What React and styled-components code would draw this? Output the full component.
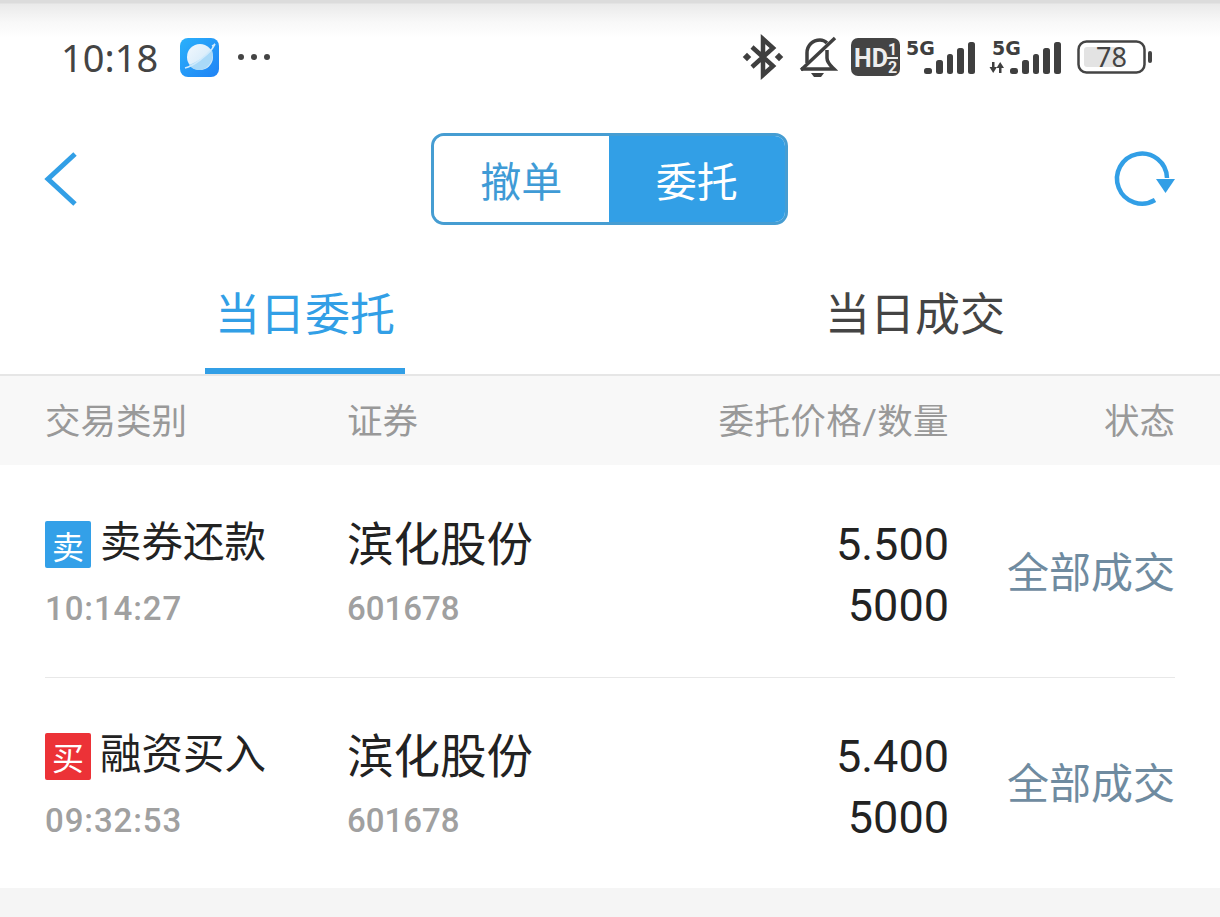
import React from "react";
import styled, { createGlobalStyle } from "styled-components";

const CJK = `"Noto Sans CJK SC", "Noto Sans", sans-serif`;
const DIGIT = `Roboto, "Noto Sans CJK SC", sans-serif`;
const BLUE = "#329fe6";
const INK = "#3f3f3f";

const Global = createGlobalStyle`
  html, body { margin: 0; padding: 0; background: #fff; }
  body { font-family: ${CJK}; }
`;

const Page = styled.div`
  width: 1220px;
  height: 917px;
  overflow: hidden;
  display: flex;
  flex-direction: column;
  background: #fff;
`;

const StatusBar = styled.div`
  height: 105px;
  box-sizing: border-box;
  padding: 0 67px 0 61px;
  display: flex;
  align-items: center;
  justify-content: space-between;
  background: linear-gradient(#dcdcdc 0, #dcdcdc 3px, #eaeaea 4px, #f8f8f8 22px, #ffffff 38px);
`;

const StatusSide = styled.div`
  display: flex;
  align-items: center;
  margin-top: 9px;
`;

const Clock = styled.span`
  font-family: "Noto Sans", sans-serif;
  font-size: 38px;
  line-height: 44px;
  color: #444;
  margin-right: 22px;
`;

const NavBar = styled.div`
  height: 148px;
  box-sizing: border-box;
  padding: 0 45px;
  display: flex;
  align-items: center;
`;

const NavSide = styled.div`
  flex: 1;
  display: flex;
  justify-content: ${(p) => (p.$end ? "flex-end" : "flex-start")};
`;

const Segments = styled.div`
  display: flex;
  width: 357px;
  height: 92px;
  box-sizing: border-box;
  border: 3px solid #469dd2;
  border-radius: 13px;
  overflow: hidden;
  margin: -1px 1px 0 -1px;
`;

const Segment = styled.div`
  flex: 1;
  display: flex;
  align-items: center;
  justify-content: center;
  font-size: 41px;
  color: ${(p) => (p.$on ? "#fff" : "#3f9bd6")};
  background: ${(p) => (p.$on ? BLUE : "#fff")};
`;

const Tabs = styled.div`
  height: 123px;
  box-sizing: border-box;
  display: flex;
  border-bottom: 2px solid #e6e6e6;
`;

const Tab = styled.div`
  width: 610px;
  display: flex;
  align-items: center;
  justify-content: center;
  position: relative;
  font-size: 45px;
  color: ${(p) => (p.$on ? BLUE : "#444")};
  padding-bottom: 4px;
  box-sizing: border-box;
`;

const TabMark = styled.span`
  position: absolute;
  left: 205px;
  bottom: 0;
  width: 200px;
  height: 6px;
  background: ${BLUE};
`;

const Grid = `
  display: grid;
  grid-template-columns: 302px 300px 1fr 226px;
  padding: 0 45px;
`;

const HeadRow = styled.div`
  ${Grid}
  height: 89px;
  align-items: center;
  background: #f8f8f8;
  color: #999;
  font-size: 35.5px;
  padding-bottom: 4px;
  box-sizing: border-box;
`;

const Right = styled.div`
  text-align: right;
`;

const HeadNum = styled(Right)`
  font-family: ${DIGIT};
  letter-spacing: 0.4px;
`;

const Row = styled.div`
  ${Grid}
  height: 212px;
  box-sizing: border-box;
  align-items: center;
  position: relative;
  & + & {
    height: 211px;
  }
  & + &::before {
    content: "";
    position: absolute;
    left: 45px;
    right: 45px;
    top: 0;
    height: 1px;
    background: #e8e8e8;
  }
`;

const Cell = styled.div`
  display: flex;
  flex-direction: column;
  gap: 26px;
  padding-top: 2px;
`;

const KindLine = styled.div`
  display: flex;
  align-items: center;
  gap: 9px;
  height: 48px;
  font-size: 41.5px;
  color: #222;
`;

const Badge = styled.span`
  width: 46px;
  height: 47px;
  margin-top: 11px;
  border-radius: 2px;
  background: ${(p) => p.$color};
  color: #fff;
  font-size: 32px;
  display: flex;
  align-items: center;
  justify-content: center;
`;

const Sub = styled.div`
  font-family: ${DIGIT};
  font-size: 33px;
  font-weight: 500;
  line-height: 40px;
  color: #a0a0a0;
  letter-spacing: ${(p) => (p.$time ? "0.9px" : "0")};
`;

const StockName = styled.div`
  font-size: 46.5px;
  height: 48px;
  box-sizing: border-box;
  padding-top: 4px;
  line-height: 44px;
  color: #222;
`;

const Numbers = styled(Right)`
  font-family: ${DIGIT};
  font-size: 45px;
  font-weight: 450;
  line-height: 61px;
  padding-top: 8px;
  color: #222;
`;

const Status = styled(Right)`
  font-size: 42px;
  padding-bottom: 4px;
  color: #6f8ba0;
`;

const Footer = styled.div`
  flex: 1;
  background: #f5f5f5;
`;

const Icon = styled.svg`
  display: block;
  flex: none;
  fill: none;
  overflow: visible;
  margin-left: ${(p) => p.$gap || 0}px;
`;

const Dots = () => (
  <Icon width="36" height="10" viewBox="0 0 36 10" $gap={18}>
    <circle cx="4" cy="5" r="3" fill="#444" />
    <circle cx="17" cy="5" r="3" fill="#444" />
    <circle cx="30" cy="5" r="3" fill="#444" />
  </Icon>
);

const AppLogo = () => (
  <Icon width="39" height="39" viewBox="0 0 39 39">
    <defs>
      <linearGradient id="lg" x1="0" y1="0" x2="1" y2="1">
        <stop offset="0" stopColor="#2bb1fb" />
        <stop offset="1" stopColor="#1f82f5" />
      </linearGradient>
      <linearGradient id="top" x1="0" y1="0" x2="1" y2="1">
        <stop offset="0" stopColor="#f2f8fd" />
        <stop offset="1" stopColor="#cbe6f9" />
      </linearGradient>
    </defs>
    <rect width="39" height="39" rx="8" fill="url(#lg)" />
    <circle cx="20" cy="19" r="13" fill="url(#top)" />
    <path d="M9 27 C17 24 26 18 32 12 C35 22 28 32 19 32 C15 32 11 30 9 27Z" fill="#a9d9f8" />
    <path d="M5 30 C14 28 26 18 32 11 L35 6 C35 6 34 7 32 8" stroke="#cfeafc" strokeWidth="1.6" />
  </Icon>
);

const Bluetooth = () => (
  <Icon width="38" height="42" viewBox="0 0 38 42">
    <path d="M8 11 L29 30 L19 39 V3 L29 12 L8 31" stroke={INK} strokeWidth="4.5" />
    <rect x="0" y="18" width="6" height="6" transform="rotate(45 3 21)" fill={INK} />
    <rect x="32" y="18" width="6" height="6" transform="rotate(45 35 21)" fill={INK} />
  </Icon>
);

const BellOff = () => (
  <Icon width="38" height="42" viewBox="0 0 38 42" $gap={16}>
    <path d="M9 27 V17 C9 9 15 4 22 4 C25 4 27 5 29 7" stroke={INK} strokeWidth="3.5" />
    <path d="M29 14 V22 C29 27 33 30 36 33 H3" stroke={INK} strokeWidth="3.5" />
    <path d="M3 34 L37 2" stroke={INK} strokeWidth="3.5" />
    <path d="M13 37 H26 L23 41 H16Z" fill={INK} />
  </Icon>
);

const HdText = styled.text`
  font-family: Roboto, sans-serif;
  font-weight: 700;
  font-size: ${(p) => p.$size}px;
  fill: ${(p) => p.$color};
`;

const HdBadge = () => (
  <Icon width="49" height="38" viewBox="0 0 49 38" $gap={15}>
    <rect width="49" height="38" rx="7" fill="#444" />
    <HdText x="3" y="29" $size={25} $color="#eee">HD</HdText>
    <HdText x="37" y="17" $size={16} $color="#eee">1</HdText>
    <path d="M36 20 H47" stroke="#eee" strokeWidth="2" />
    <HdText x="37" y="35" $size={16} $color="#eee">2</HdText>
  </Icon>
);

const FiveG = styled.text`
  font-family: "DejaVu Sans", sans-serif;
  font-weight: 700;
  font-size: 19px;
  fill: ${INK};
`;

const bars = [
  [21, 29, 8, 6],
  [33, 21, 7, 14],
  [44, 15, 6, 20],
  [54, 9, 7, 26],
  [65, 3, 7, 32],
];

const Signal = ({ arrows, gap }) => (
  <Icon width="72" height="36" viewBox="0 0 72 36" $gap={gap}>
    <FiveG x="3" y="16">5G</FiveG>
    {arrows && (
      <>
        <path d="M3 23 H5.5 V28 H8 L4.2 34 L0.5 28 H3Z" fill={INK} />
        <path d="M10 34 H12.5 V29 H15 L11.2 23 L7.5 29 H10Z" fill={INK} />
      </>
    )}
    {bars.map(([x, y, w, h]) => (
      <rect key={x} x={x} y={y} width={w} height={h} rx="2.5" fill={INK} />
    ))}
  </Icon>
);

const BatteryText = styled.text`
  font-family: "Noto Sans", sans-serif;
  font-size: 27px;
  fill: #444;
`;

const Battery = () => (
  <Icon width="76" height="34" viewBox="0 0 76 34" $gap={16}>
    <rect x="1.5" y="1.5" width="66" height="31" rx="8" stroke="#444" strokeWidth="2.5" />
    <rect x="7" y="7" width="39" height="20" rx="3" fill="#e3e3e3" />
    <BatteryText x="19" y="27">78</BatteryText>
    <rect x="71" y="11" width="4" height="12" rx="2" fill="#444" />
  </Icon>
);

const Back = () => (
  <Icon width="32" height="54" viewBox="0 0 32 54">
    <path d="M30 2 L3 27 L30 52" stroke={BLUE} strokeWidth="5" />
  </Icon>
);

const Refresh = () => (
  <Icon width="60" height="54" viewBox="0 0 60 54">
    <path d="M52 26 A25 25 0 1 0 40 48" stroke={BLUE} strokeWidth="4.5" />
    <path d="M41 27 H60 L50.5 41Z" fill={BLUE} />
  </Icon>
);

const Kind = ({ mark, color, label }) => (
  <KindLine>
    <Badge $color={color}>{mark}</Badge>
    {label}
  </KindLine>
);

const orders = [
  { mark: "卖", color: "#33a0e8", label: "卖券还款", time: "10:14:27", price: "5.500", qty: "5000" },
  { mark: "买", color: "#ec3237", label: "融资买入", time: "09:32:53", price: "5.400", qty: "5000" },
];

export default function App() {
  return (
    <Page>
      <Global />
      <StatusBar>
        <StatusSide>
          <Clock>10:18</Clock>
          <AppLogo />
          <Dots />
        </StatusSide>
        <StatusSide>
          <Bluetooth />
          <BellOff />
          <HdBadge />
          <Signal gap={3} />
          <Signal arrows gap={14} />
          <Battery />
        </StatusSide>
      </StatusBar>
      <NavBar>
        <NavSide>
          <Back />
        </NavSide>
        <Segments>
          <Segment>撤单</Segment>
          <Segment $on>委托</Segment>
        </Segments>
        <NavSide $end>
          <Refresh />
        </NavSide>
      </NavBar>
      <Tabs>
        <Tab $on>
          当日委托
          <TabMark />
        </Tab>
        <Tab>当日成交</Tab>
      </Tabs>
      <HeadRow>
        <div>交易类别</div>
        <div>证券</div>
        <HeadNum>委托价格/数量</HeadNum>
        <Right>状态</Right>
      </HeadRow>
      {orders.map((o) => (
        <Row key={o.time}>
          <Cell>
            <Kind mark={o.mark} color={o.color} label={o.label} />
            <Sub $time>{o.time}</Sub>
          </Cell>
          <Cell>
            <StockName>滨化股份</StockName>
            <Sub>601678</Sub>
          </Cell>
          <Numbers>
            {o.price}
            <br />
            {o.qty}
          </Numbers>
          <Status>全部成交</Status>
        </Row>
      ))}
      <Footer />
    </Page>
  );
}
